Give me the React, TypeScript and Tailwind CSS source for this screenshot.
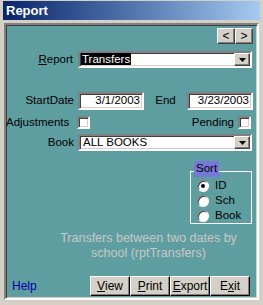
import React from "react";

const sunken =
  "border-2 border-t-[#808080] border-l-[#808080] border-b-white border-r-white shadow-[inset_1px_1px_0_#404040,inset_-1px_-1px_0_#d4d0c8]";
const raised =
  "bg-[#d4d0c8] border border-t-white border-l-white border-b-[#404040] border-r-[#404040] shadow-[inset_-1px_-1px_0_#808080]";

const DropButton: React.FC = () => (
  <div className={`${raised} w-[16px] h-full flex items-center justify-center`}>
    <svg width="7" height="4" viewBox="0 0 7 4">
      <polygon points="0,0 7,0 3.5,4" fill="#000" />
    </svg>
  </div>
);

const Check: React.FC = () => <div className={`${sunken} w-[13px] h-[13px] bg-white`} />;

const Radio: React.FC<{ on?: boolean; label: string }> = ({ on, label }) => (
  <div className="flex items-center h-[15px]">
    <div className="w-[12px] h-[12px] rounded-full bg-white border border-t-[#808080] border-l-[#808080] border-b-white border-r-white flex items-center justify-center shadow-[inset_1px_1px_0_#404040]">
      {on && <div className="w-[4px] h-[4px] rounded-full bg-black" />}
    </div>
    <span className="ml-[6px]">{label}</span>
  </div>
);

const Btn: React.FC<{ u: string; pre?: string; post: string }> = ({ u, pre, post }) => (
  <button className="w-[40px] h-[20px] bg-[#d4d0c8] border border-t-white border-l-white border-b-black border-r-black shadow-[inset_-1px_-1px_0_#808080] text-[12px] text-black flex items-center justify-center">
    {pre}
    <span className="underline">{u}</span>
    {post}
  </button>
);

export default function App() {
  return (
    <div
      className="w-[263px] h-[305px] bg-[#d4d0c8] pt-[1px] px-[3px] text-black text-[11.5px] leading-none"
      style={{ fontFamily: '"Liberation Sans", Arial, sans-serif' }}
    >
      <div className="h-[19px] bg-gradient-to-r from-[#0a246a] to-[#a6caf0] flex items-center pl-[3px]">
        <span className="text-white font-bold text-[13px]">Report</span>
      </div>
      <div className={`mt-[3px] mx-[1px] h-[277px] bg-[#5f9ea0] ${sunken} flex flex-col`}>
        <div className="flex justify-end pt-[3px] pr-[4px]">
          <div className={`${raised} w-[18px] h-[16px] flex items-center justify-center text-[12px]`}>&lt;</div>
          <div className={`${raised} w-[18px] h-[16px] flex items-center justify-center text-[12px]`}>&gt;</div>
        </div>

        <div className="flex items-center mt-[7px] h-[17px]">
          <div className="w-[68px] text-right pr-[1px]">
            <span className="underline">R</span>eport
          </div>
          <div className={`ml-[4px] w-[174px] h-[17px] bg-white ${sunken} flex items-center`}>
            <div className="flex-1 pl-[1px]">
              <span className="bg-black text-white px-[1px]">Transfers</span>
            </div>
            <DropButton />
          </div>
        </div>

        <div className="flex items-center mt-[24px] h-[18px]">
          <div className="w-[68px] text-right">StartDate</div>
          <div className={`ml-[4px] w-[66px] h-[18px] bg-white ${sunken} flex items-center justify-end pr-[2px]`}>3/1/2003</div>
          <div className="w-[43px] text-center">End</div>
          <div className={`w-[66px] h-[18px] bg-white ${sunken} flex items-center justify-end pr-[2px]`}>3/23/2003</div>
        </div>

        <div className="flex items-center mt-[6px] h-[13px]">
          <div className="w-[62px] text-right">Adjustments</div>
          <div className="ml-[9px]">
            <Check />
          </div>
          <div className="flex-1 text-right pr-[4px]">Pending</div>
          <div className="mr-[6px]">
            <Check />
          </div>
        </div>

        <div className="flex items-center mt-[5px] h-[17px]">
          <div className="w-[68px] text-right">Book</div>
          <div className={`ml-[4px] w-[174px] h-[17px] bg-white ${sunken} flex items-center`}>
            <div className="flex-1 pl-[3px]">ALL BOOKS</div>
            <DropButton />
          </div>
        </div>

        <div className="flex justify-end mt-[10px] pr-[5px]">
          <div className="relative w-[62px] pt-[10px]">
            <div className="absolute left-[4px] top-0 bg-[#7878d8] px-[2px] h-[16px] flex items-center">Sort</div>
            <div className="border border-white h-[53px] pt-[6px] pl-[6px] flex flex-col">
              <Radio on label="ID" />
              <Radio label="Sch" />
              <Radio label="Book" />
            </div>
          </div>
        </div>

        <div className="mt-[7px] text-[#c8c8c8] text-[12.5px] leading-[15px] text-center pl-[42px] pr-[8px]">
          Transfers between two dates by
          <br />
          school (rptTransfers)
        </div>

        <div className="flex items-center mt-auto mb-[2px] pl-[6px] pr-[7px]">
          <div className="text-[#0000a8] text-[12px]">Help</div>
          <div className="ml-auto flex">
            <Btn u="V" post="iew" />
            <Btn u="P" post="rint" />
            <Btn u="E" post="xport" />
            <Btn pre="E" u="x" post="it" />
          </div>
        </div>
      </div>
    </div>
  );
}
